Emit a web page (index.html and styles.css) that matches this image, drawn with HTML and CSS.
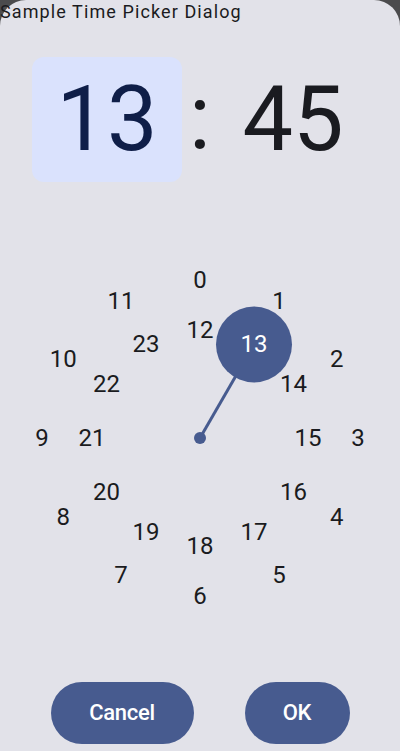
FILE: index.html
```html
<!DOCTYPE html>
<html lang="en">
<head>
    <meta charset="UTF-8">
    <meta name="viewport" content="width=device-width, initial-scale=1.0">
    <title>Sample Time Picker Dialog</title>
    <link rel="stylesheet" href="styles.css">
</head>
<body>
    <div class="dialog">
        <div class="title">Sample Time Picker Dialog</div>

        <div class="time">
            <div class="hour">13</div>
            <div class="colon">:</div>
            <div class="minute">45</div>
        </div>

        <div class="dial">
            <svg class="hand" width="340" height="340" viewBox="0 0 340 340">
                <line x1="170" y1="170" x2="224" y2="76.5" stroke="#475b8f" stroke-width="3"/>
                <circle cx="170" cy="170" r="6" fill="#475b8f"/>
                <circle cx="224" cy="76.5" r="38" fill="#475b8f"/>
            </svg>
            <!-- outer ring 0-11 -->
            <span class="num outer" style="--a:0deg">0</span>
            <span class="num outer" style="--a:30deg">1</span>
            <span class="num outer" style="--a:60deg">2</span>
            <span class="num outer" style="--a:90deg">3</span>
            <span class="num outer" style="--a:120deg">4</span>
            <span class="num outer" style="--a:150deg">5</span>
            <span class="num outer" style="--a:180deg">6</span>
            <span class="num outer" style="--a:210deg">7</span>
            <span class="num outer" style="--a:240deg">8</span>
            <span class="num outer" style="--a:270deg">9</span>
            <span class="num outer" style="--a:300deg">10</span>
            <span class="num outer" style="--a:330deg">11</span>
            <!-- inner ring 12-23 -->
            <span class="num inner" style="--a:0deg">12</span>
            <span class="num inner selected" style="--a:30deg">13</span>
            <span class="num inner" style="--a:60deg">14</span>
            <span class="num inner" style="--a:90deg">15</span>
            <span class="num inner" style="--a:120deg">16</span>
            <span class="num inner" style="--a:150deg">17</span>
            <span class="num inner" style="--a:180deg">18</span>
            <span class="num inner" style="--a:210deg">19</span>
            <span class="num inner" style="--a:240deg">20</span>
            <span class="num inner" style="--a:270deg">21</span>
            <span class="num inner" style="--a:300deg">22</span>
            <span class="num inner" style="--a:330deg">23</span>
        </div>

        <div class="buttons">
            <div class="btn cancel">Cancel</div>
            <div class="btn ok">OK</div>
        </div>
    </div>
</body>
</html>
```

FILE: styles.css
```css
* {
    box-sizing: border-box;
}
body {
    margin: 0;
    background-color: #4b4b4d;
    font-family: Roboto, "Noto Sans", sans-serif;
}
.dialog {
    width: 400px;
    height: 751px;
    background-color: #e2e2e9;
    border-radius: 26px 26px 0 0;
    display: flex;
    flex-direction: column;
    align-items: center;
}
.title {
    align-self: flex-start;
    font-size: 18px;
    line-height: 24px;
    letter-spacing: 1.1px;
    color: #1a1b20;
}
.time {
    margin-top: 33px;
    display: flex;
    height: 125px;
}
.hour, .minute {
    width: 150px;
    height: 125px;
    border-radius: 12px;
    text-align: center;
    line-height: 125px;
    font-size: 90px;
}
.hour {
    background-color: #dae2fd;
    color: #0f1e48;
}
.minute {
    color: #1a1b20;
}
.colon {
    width: 36px;
    text-align: center;
    line-height: 121px;
    font-size: 90px;
    color: #1a1b20;
}
.dial {
    position: relative;
    margin-top: 86px;
    width: 340px;
    height: 340px;
}
.hand {
    position: absolute;
    left: 0;
    top: 0;
}
.num {
    position: absolute;
    left: 150px;
    top: 150px;
    width: 40px;
    height: 40px;
    line-height: 40px;
    text-align: center;
    font-size: 24px;
    color: #1a1b20;
}
.outer {
    transform: rotate(var(--a)) translateY(-158px) rotate(calc(-1 * var(--a)));
}
.inner {
    transform: rotate(var(--a)) translateY(-108px) rotate(calc(-1 * var(--a)));
}
.selected {
    color: #ffffff;
}
.buttons {
    margin-top: 74px;
    display: flex;
    gap: 51px;
}
.btn {
    height: 62px;
    border-radius: 31px;
    background-color: #475b8f;
    color: #ffffff;
    font-size: 22px;
    font-weight: 500;
    letter-spacing: -0.3px;
    line-height: 62px;
    text-align: center;
}
.cancel {
    width: 143px;
}
.ok {
    width: 105px;
}
```
